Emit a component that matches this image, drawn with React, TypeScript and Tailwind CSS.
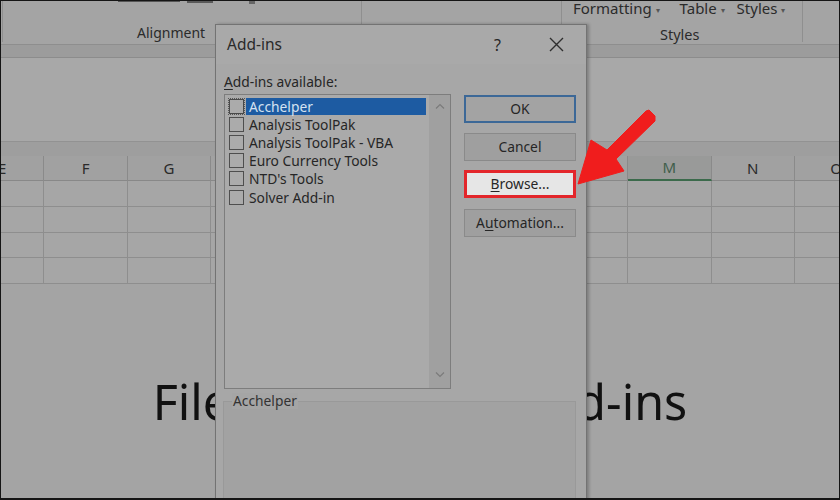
import React from 'react';

const COLS = ['E', 'F', 'G', 'H', 'I', 'J', 'K', 'L', 'M', 'N', 'O'];
const ADDINS = ['Acchelper', 'Analysis ToolPak', 'Analysis ToolPak - VBA', 'Euro Currency Tools', "NTD's Tools", 'Solver Add-in'];

const Ribbon: React.FC = () => (
  <div className="h-[45px] flex border-b border-[#8e8e8e] bg-[#a4a4a4] text-[14px] text-[#2b2b2b]">
    <div className="w-[3px] border-r border-[#8f8f8f] h-[42px]" />
    <div className="w-[359px] h-[42px] border-r border-[#8f8f8f] flex flex-col">
      <div className="flex items-start h-[24px]">
        <div className="ml-[115px] w-[62px] h-[2px] bg-[#555]" />
        <div className="ml-[7px] w-[26px] h-[3px] bg-[#595959]" />
        <div className="ml-[36px] w-[6px] h-[4px] bg-[#666]" />
      </div>
      <div className="pl-[134px] leading-[18px]">Alignment</div>
    </div>
    <div className="w-[200px] h-[42px] border-r border-[#8f8f8f]" />
    <div className="w-[241px] h-[42px] border-r border-[#8f8f8f] flex flex-col">
      <div className="flex items-center gap-[20px] pl-[11px] h-[19px] text-[15px] leading-[19px]">
        <span>Formatting <span className="text-[8px] align-middle text-[#555]">▾</span></span>
        <span>Table <span className="text-[8px] align-middle text-[#555]">▾</span></span>
        <span className="-ml-[8px]">Styles <span className="text-[8px] align-middle text-[#555]">▾</span></span>
      </div>
      <div className="pl-[98px] leading-[30px] text-[14.5px]">Styles</div>
    </div>
  </div>
);

const Sheet: React.FC = () => (
  <div className="flex flex-col">
    <div className="h-[13px] bg-[#9c9c9c] border-b border-[#8c8c8c]" />
    <div className="h-[84px] bg-[#a8a8a8] border-b border-[#929292]" />
    <div className="h-[14px] bg-[#9e9e9e]" />
    <div className="-ml-[39px] grid grid-cols-[repeat(11,83.4px)] h-[25px] bg-[#a1a1a1] border-b border-[#888]">
      {COLS.map(c => (
        <div
          key={c}
          className={`flex items-center justify-center text-[15px] border-r border-[#8a8a8a] ${
            c === 'M' ? 'bg-[#999a99] text-[#3f5e4b] border-b-2 border-b-[#3b6a4b]' : 'text-[#2a2a2a]'
          }`}
        >
          {c}
        </div>
      ))}
    </div>
    {[0, 1, 2, 3].map(r => (
      <div key={r} className="-ml-[39px] grid grid-cols-[repeat(11,83.4px)] h-[25.8px] bg-[#a6a6a6] border-b border-[#8e8e8e]">
        {COLS.map(c => (
          <div key={c} className="border-r border-[#8e8e8e]" />
        ))}
      </div>
    ))}
    <div className="h-[214px] flex items-start justify-center pt-[90px] bg-[#a4a4a4]">
      <span className="text-[48.4px] leading-[54px] text-[#111] whitespace-nowrap">File &gt; Options &gt; Add-ins</span>
    </div>
  </div>
);

const Chevron: React.FC<{ up?: boolean }> = ({ up }) => (
  <svg className="w-[10px] h-[6px]" viewBox="0 0 10 6" fill="none" stroke="#7b7b7b" strokeWidth={1.2}>
    {up ? <path d="M1 5.5L5 1.5L9 5.5" /> : <path d="M1 0.5L5 4.5L9 0.5" />}
  </svg>
);

const DialogButton: React.FC<{ children: React.ReactNode; variant?: 'default' | 'primary' | 'marked' }> = ({
  children,
  variant = 'default',
}) => {
  const cls =
    variant === 'primary'
      ? 'border-2 border-[#3c6897] bg-[#a3a3a3]'
      : variant === 'marked'
      ? 'border-[3px] border-[#e3262b] bg-[#e6e6e6]'
      : 'border border-[#8a8a8a] bg-[#9f9f9f]';
  return (
    <div className={`w-[112px] h-[28px] flex items-center justify-center text-[13.8px] text-[#262626] ${cls}`}>
      {children}
    </div>
  );
};

const AddinsDialog: React.FC = () => (
  <div className="absolute left-[215px] top-[24px] w-[372px] h-[478px] bg-[#a7a7a7] border border-[#737373] shadow-[2px_0_3px_rgba(0,0,0,0.25)] text-[#262626]">
    <div className="h-[39px] flex items-center pl-[11px] pr-[22px] bg-[#a9a9a9]">
      <span className="text-[15.5px] text-[#2a2a2a]">Add-ins</span>
      <span className="ml-auto text-[16px] mr-[48px]">?</span>
      <svg className="w-[15px] h-[15px]" viewBox="0 0 15 15" stroke="#2e2e2e" strokeWidth={1.4}>
        <path d="M1 1L14 14M14 1L1 14" />
      </svg>
    </div>
    <div className="pl-[8px] pr-[10px]">
      <div className="mt-[10px] h-[16px] leading-[16px] text-[13.8px]">
        <span className="underline underline-offset-2">A</span>dd-ins available:
      </div>
      <div className="flex mt-[4px]">
        <div className="w-[228px] h-[295px] border border-[#7d7d7d] bg-[#aaaaaa] flex">
          <div className="flex-1 pt-[2px] pl-[4px]">
            {ADDINS.map((a, i) => (
              <div key={a} className="h-[18.2px] flex items-center">
                <div
                  className={`w-[15px] h-[15px] border ${
                    i === 0 ? 'border-[#4a4a4a] outline-1 outline-dotted outline-[#555]' : 'border-[#4e4e4e]'
                  } bg-[#ababab]`}
                />
                <div
                  className={`ml-[2px] flex-1 h-[17px] leading-[17px] pl-[3px] text-[13.8px] whitespace-nowrap ${
                    i === 0 ? 'bg-[#1d5ba2] text-[#d4e2f1]' : ''
                  }`}
                >
                  {a}
                </div>
              </div>
            ))}
          </div>
          <div className="w-[21px] ml-[3px] bg-[#a0a0a0] flex flex-col items-center justify-between pt-[8px] pb-[10px]">
            <Chevron up />
            <Chevron />
          </div>
        </div>
        <div className="ml-[13px] mt-[1px] flex flex-col gap-[10px]">
          <DialogButton variant="primary">OK</DialogButton>
          <DialogButton>Cancel</DialogButton>
          <div className="-mt-[1px]">
            <DialogButton variant="marked">
              <span>
                <span className="underline underline-offset-2">B</span>rowse...
              </span>
            </DialogButton>
          </div>
          <div className="mt-[1px]">
            <DialogButton>
              <span>
                A<span className="underline underline-offset-2">u</span>tomation...
              </span>
            </DialogButton>
          </div>
        </div>
      </div>
      <div className="mt-[12px] -ml-[1px] w-[353px] h-[120px] border-t border-l border-r border-[#999] bg-[#a2a2a2] relative">
        <span className="absolute -top-[9px] left-[8px] px-[1px] text-[13.8px] leading-[16px] bg-[#a5a5a5] text-[#333]">
          Acchelper
        </span>
      </div>
    </div>
  </div>
);

const RedArrow: React.FC = () => (
  <svg className="absolute left-0 top-0 w-[840px] h-[500px] pointer-events-none" viewBox="0 0 840 500">
    <polygon
      points="578,184 591,140 607,150 646,111 649,110 655,116 655,121 616,159 624,171"
      fill="#f01d1d"
      strokeLinejoin="round"
      stroke="#f01d1d"
      strokeWidth={1}
    />
  </svg>
);

export default function App() {
  return (
    <div className="relative w-[840px] h-[500px] overflow-hidden bg-[#a4a4a4] font-['Noto_Sans',sans-serif]">
      <Ribbon />
      <Sheet />
      <AddinsDialog />
      <RedArrow />
      <div className="absolute inset-0 border-t border-l border-r border-b-2 border-[#151515] pointer-events-none" />
    </div>
  );
}
